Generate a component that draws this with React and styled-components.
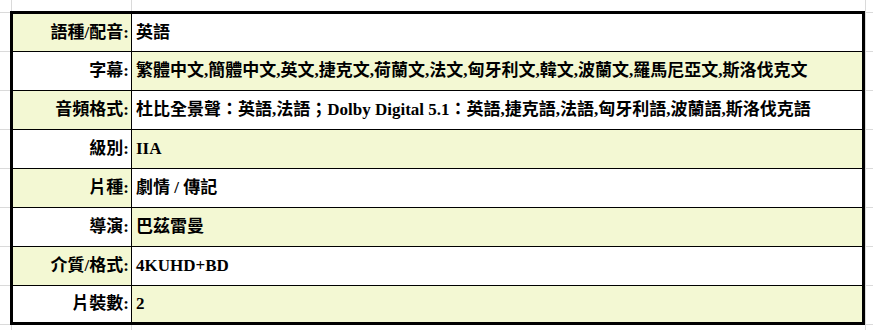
import React from 'react';
import styled, { createGlobalStyle } from 'styled-components';

const GlobalStyle = createGlobalStyle`
  html, body {
    margin: 0;
    padding: 0;
    background: #ffffff;
  }
`;

const GRID = '#dadada';
const SHADE = '#f3f8d3';

// excel-like sheet: faint gridlines behind the bordered block
const Sheet = styled.div`
  box-sizing: border-box;
  width: 873px;
  height: 330px;
  padding: 11px 0 0 10px;
  background-color: #ffffff;
  background-image:
    linear-gradient(to right, transparent 11px, ${GRID} 11px, ${GRID} 12px, transparent 12px),
    linear-gradient(to right, transparent 131px, ${GRID} 131px, ${GRID} 132px, transparent 132px),
    linear-gradient(to right, transparent 865px, ${GRID} 865px, ${GRID} 866px, transparent 866px),
    repeating-linear-gradient(to bottom, ${GRID} 0 1px, transparent 1px 39px);
  background-repeat: no-repeat, no-repeat, no-repeat, repeat-y;
  background-size: 100% 100%, 100% 100%, 100% 100%, 100% 39px;
  background-position: 0 0, 0 0, 0 0, 0 12px;
`;

const Table = styled.div`
  box-sizing: border-box;
  width: 855px;
  height: 314px;
  border: 3px solid #000;
  background: #000;
  display: grid;
  grid-template-columns: 118px 1fr;
  grid-template-rows: 37px repeat(6, 38px) 36px;
  gap: 1px;
  font-family: "Liberation Serif", "Noto Sans CJK TC", serif;
  font-size: 17px;
  font-weight: 700;
  color: #000;
`;

const Cell = styled.div`
  display: flex;
  align-items: center;
  background: ${p => (p.$shaded ? SHADE : '#ffffff')};
  white-space: nowrap;
  overflow: hidden;
  line-height: 20px;
`;

const Label = styled(Cell)`
  justify-content: flex-end;
  padding-right: 2px;
`;

const Value = styled(Cell)`
  justify-content: flex-start;
  padding-left: 4px;
`;

const rows = [
  ['語種/配音:', '英語'],
  ['字幕:', '繁體中文,簡體中文,英文,捷克文,荷蘭文,法文,匈牙利文,韓文,波蘭文,羅馬尼亞文,斯洛伐克文'],
  ['音頻格式:', '杜比全景聲：英語,法語；Dolby Digital 5.1：英語,捷克語,法語,匈牙利語,波蘭語,斯洛伐克語'],
  ['級別:', 'IIA'],
  ['片種:', '劇情 / 傳記'],
  ['導演:', '巴茲雷曼'],
  ['介質/格式:', '4KUHD+BD'],
  ['片裝數:', '2'],
];

export default function App() {
  return (
    <>
      <GlobalStyle />
      <Sheet>
        <Table>
          {rows.map(([label, value], i) => (
            <React.Fragment key={label}>
              <Label $shaded={i % 2 === 0}>{label}</Label>
              <Value $shaded={i % 2 === 1}>{value}</Value>
            </React.Fragment>
          ))}
        </Table>
      </Sheet>
    </>
  );
}
